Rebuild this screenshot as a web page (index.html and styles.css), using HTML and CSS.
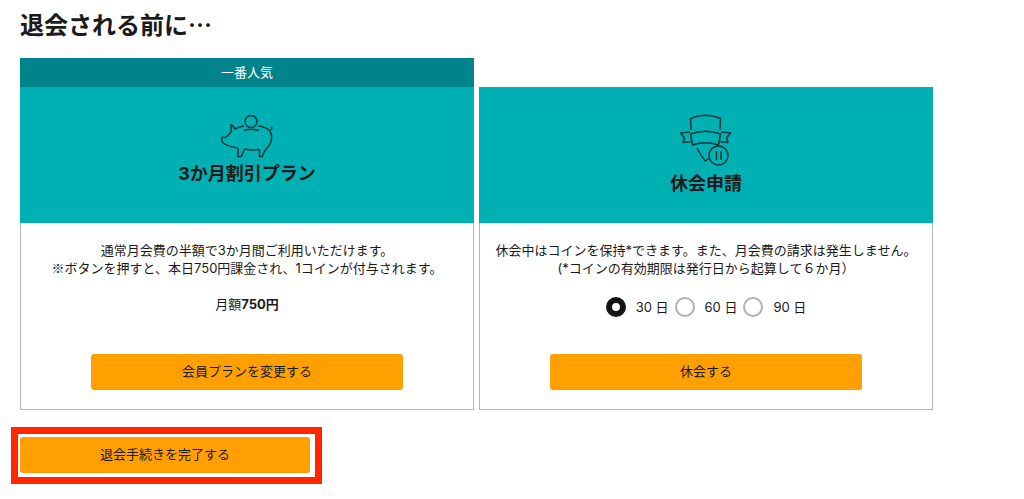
FILE: index.html
```html
<!DOCTYPE html>
<html lang="ja">
<head>
    <meta charset="UTF-8">
    <meta name="viewport" content="width=device-width, initial-scale=1.0">
    <title>退会される前に</title>
    <link rel="stylesheet" href="styles.css">
</head>
<body>
    <main class="container">
        <h1>退会される前に…</h1>

        <div class="plans">
            <section class="plan">
                <p class="plan-banner">一番人気</p>
                <div class="plan-header">
                    <svg class="icon-pig" viewBox="0 0 54 45" aria-hidden="true">
                        <circle cx="31" cy="7.500" r="6"/>
                        <path d="M24 12C20.500 12.500 17.500 13.500 15 15C14 12.500 12.500 11.500 10.500 10.500C11.500 13 11 15 11.500 17.500C9 20 7.500 22.500 5 23.500L1.500 23.500L2 27.500C4 31 12 33 17.500 34C19 36.500 18 39 17.500 42.500L21.500 42.500C23 39 23 36.500 25 35C30 36.500 35 36 39.500 35.500L39.500 42.500L42.500 42.500C43.500 37 47.500 34 50 30C52.500 25.500 52 19.500 49.500 16.500C46.500 13.500 42.500 12.500 38.500 12"/>
                        <path d="M24 16.500C28.500 15 34 15 39 16.500"/>
                        <path d="M49.500 16.500C52.500 15.500 52.500 13 51 13"/>
                    </svg>
                    <h2>3か月割引プラン</h2>
                </div>
                <div class="plan-body">
                    <p>通常月会費の半額で3か月間ご利用いただけます。<br><span class="mark">※</span>ボタンを押すと、本日750円課金され、1コインが付与されます。</p>
                    <p class="price">月額<strong>750円</strong></p>
                    <button type="button" class="btn">会員プランを変更する</button>
                </div>
            </section>

            <section class="plan">
                <div class="plan-header">
                    <svg class="icon-pause" viewBox="0 0 54 55" aria-hidden="true">
                        <path d="M12 16L11.500 4.500C21 0.500 32 0.500 41.500 4.500L41 16"/>
                        <path d="M11.500 20C21 16.500 32 16.500 41.500 20L39.500 31C31 28 22 28 13.500 31Z"/>
                        <path d="M11 18L1.500 19L5.500 24L4 28.500L13 27.500"/>
                        <path d="M42 18L51.500 19L47.500 24L49 28.500L40 27.500"/>
                        <path d="M18 34C20.500 39 23 43.500 26.500 47L30.500 44"/>
                        <circle cx="39.500" cy="41.500" r="9.500"/>
                        <path d="M37.500 37V46M42 37V46"/>
                    </svg>
                    <h2>休会申請</h2>
                </div>
                <div class="plan-body">
                    <p>休会中はコインを保持*できます。また、月会費の請求は発生しません。<br>(*コインの有効期限は発行日から起算して６か月）</p>
                    <div class="days">
                        <label><input type="radio" name="days" value="30" checked>30 日</label>
                        <label><input type="radio" name="days" value="60">60 日</label>
                        <label><input type="radio" name="days" value="90">90 日</label>
                    </div>
                    <button type="button" class="btn">休会する</button>
                </div>
            </section>
        </div>

        <div class="complete">
            <button type="button" class="btn">退会手続きを完了する</button>
        </div>
    </main>
</body>
</html>
```
FILE: styles.css
```css
* {
    box-sizing: border-box;
}

body {
    margin: 0;
    background-color: #fff;
    color: #1a1a1a;
    font-family: Inter, "Noto Sans CJK JP", sans-serif;
    font-size: 13px;
    line-height: 18px;
}

h1, h2, p {
    margin: 0;
}

.container {
    padding: 8px 11px 15px;
}

h1 {
    margin: 0 9px 18px;
    font-family: "Noto Sans CJK JP", sans-serif;
    font-size: 24px;
    line-height: 32px;
}

.plans {
    display: grid;
    grid-template-columns: 1fr 1fr;
    align-items: end;
    gap: 5px;
    max-width: 913px;
    margin: 0 9px;
}

.plan {
    text-align: center;
}

.plan-banner {
    padding: 5px 0 6px;
    background-color: #00838a;
    color: #fff;
}

.plan-header {
    display: flex;
    flex-direction: column;
    align-items: center;
    gap: 5px;
    min-height: 136px;
    padding-top: 27px;
    background-color: #00b0b2;
}

.plan-header svg {
    width: 54px;
    fill: none;
    stroke: #12383a;
    stroke-width: 1.5;
    stroke-linejoin: round;
}

.icon-pig {
    height: 45px;
}

.icon-pause {
    height: 55px;
}

h2 {
    font-size: 18px;
    line-height: 20px;
}

.plan-body {
    display: flex;
    flex-direction: column;
    align-items: center;
    min-height: 187px;
    padding: 18px 10px 19px;
    border: 1px solid #b5b5b5;
    border-top: none;
}

.mark {
    font-family: "Noto Sans CJK JP", sans-serif;
    line-height: 1;
}

.price {
    margin-top: 18px;
}

.days {
    display: flex;
    gap: 6px;
    margin-top: 20px;
}

.days label {
    display: flex;
    align-items: center;
    gap: 10px;
}

.days input {
    appearance: none;
    width: 20px;
    height: 20px;
    margin: 0;
    border: 2px solid #b0b0b0;
    border-radius: 50%;
    background-color: #fff;
}

.days input:checked {
    border: 6px solid #141414;
}

.btn {
    width: 100%;
    height: 36px;
    padding: 0 0 2px;
    border: none;
    border-radius: 3px;
    background-color: #ffa000;
    color: #1a1a1a;
    font: inherit;
    cursor: pointer;
}

.plan-body .btn {
    width: 72%;
    margin-top: auto;
}

.complete {
    max-width: 311px;
    margin-top: 17px;
    padding: 3px 5px 4px 2px;
    border: 7px solid #ff2600;
}
```
